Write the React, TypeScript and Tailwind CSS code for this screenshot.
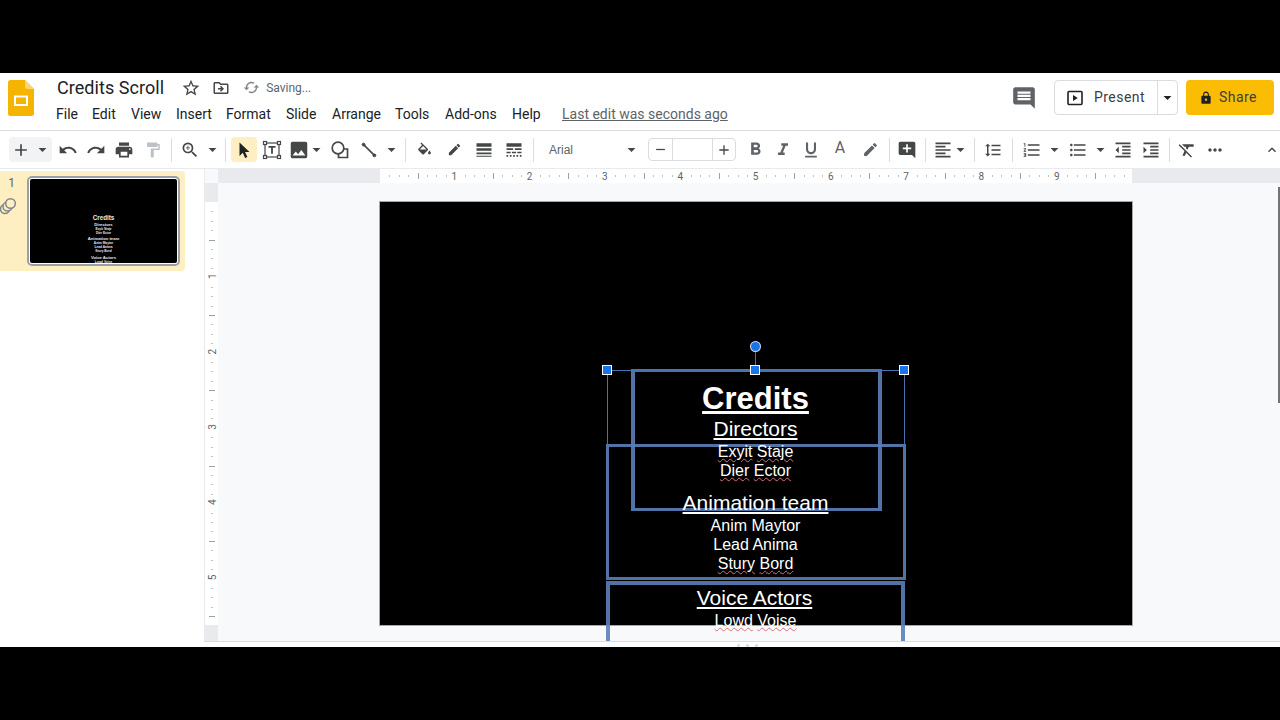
import type { ReactNode } from "react";
import {
  MdAdd,
  MdAddComment,
  MdArrowDropDown,
  MdCached,
  MdComment,
  MdEdit,
  MdExpandLess,
  MdFormatAlignLeft,
  MdFormatBold,
  MdFormatClear,
  MdFormatIndentDecrease,
  MdFormatIndentIncrease,
  MdFormatItalic,
  MdFormatLineSpacing,
  MdFormatListBulleted,
  MdFormatListNumbered,
  MdFormatPaint,
  MdFormatUnderlined,
  MdImage,
  MdLineStyle,
  MdLineWeight,
  MdLock,
  MdMoreHoriz,
  MdOutlineDriveFileMove,
  MdPrint,
  MdRedo,
  MdRemove,
  MdStarBorder,
  MdUndo,
  MdZoomIn,
} from "react-icons/md";

const PX_PER_INCH = 75.3;

const Slot = ({ className, children }: { className: string; children?: ReactNode }) => (
  <div className={`flex h-full shrink-0 items-center justify-center ${className}`}>{children}</div>
);

const Sep = ({ className }: { className: string }) => (
  <div className={`flex h-full shrink-0 items-center justify-center ${className}`}>
    <div className="h-[24px] w-px bg-[#dadce0]" />
  </div>
);

const Drop = () => <MdArrowDropDown size={19} className="shrink-0" />;

const SlidesLogo = () => (
  <svg width="26" height="36" viewBox="0 0 26 36" className="shrink-0">
    <path d="M2.500 0H17l9 9v24.500a2.500 2.500 0 0 1-2.500 2.500h-21A2.500 2.500 0 0 1 0 33.500v-31A2.500 2.500 0 0 1 2.500 0z" fill="#f4b400" />
    <path d="M17 0l9 9h-6.500A2.500 2.500 0 0 1 17 6.500z" fill="#f9d76a" />
    <path d="M6 15.500h14v10.500H6z" fill="#fff" />
    <path d="M8 17.500h10v6.500H8z" fill="#f4b400" />
  </svg>
);

const CursorIcon = () => (
  <svg width="20" height="20" viewBox="0 0 20 20">
    <path d="M5.500 2.500v13.500l3.300-3.200 2.300 5.200 2.300-1-2.300-5.100h4.400z" fill="#202124" />
  </svg>
);

const TextBoxIcon = () => (
  <svg width="20" height="20" viewBox="0 0 20 20" fill="none" stroke="#444746">
    <rect x="3" y="3" width="14" height="14" strokeWidth="1.200" />
    <rect x="1.500" y="1.500" width="3" height="3" fill="#fff" strokeWidth="1.200" />
    <rect x="15.500" y="1.500" width="3" height="3" fill="#fff" strokeWidth="1.200" />
    <rect x="1.500" y="15.500" width="3" height="3" fill="#fff" strokeWidth="1.200" />
    <rect x="15.500" y="15.500" width="3" height="3" fill="#fff" strokeWidth="1.200" />
    <path d="M6.500 6.800h7M10 6.800v7" strokeWidth="1.800" />
  </svg>
);

const ShapeIcon = () => (
  <svg width="20" height="20" viewBox="0 0 20 20" fill="none" stroke="#444746" strokeWidth="1.700">
    <circle cx="8" cy="8" r="5.800" />
    <path d="M13.800 9H17.500V17.500H8.500V13.800" />
  </svg>
);

const LineIcon = () => (
  <svg width="20" height="20" viewBox="0 0 20 20" fill="#444746" stroke="#444746">
    <path d="M4 4l12 12" strokeWidth="1.800" />
    <circle cx="4" cy="4" r="1.600" />
    <circle cx="16" cy="16" r="1.600" />
  </svg>
);

const FillIcon = () => (
  <svg width="17" height="17" viewBox="0 0 24 20" fill="#444746">
    <path d="M16.560 8.940L7.620 0 6.210 1.410l2.380 2.380-5.150 5.150c-.59.59-.59 1.540 0 2.120l5.500 5.500c.29.29.68.44 1.060.44s.77-.15 1.060-.44l5.500-5.500c.59-.58.59-1.530 0-2.120zM5.210 10L10 5.210 14.790 10H5.210zM19 11.500s-2 2.170-2 3.500c0 1.100.9 2 2 2s2-.9 2-2c0-1.330-2-3.500-2-3.500z" />
  </svg>
);

const PresentIcon = () => (
  <svg width="16" height="16" viewBox="0 0 16 16" fill="none">
    <rect x="1" y="1.500" width="14" height="13" rx="1" stroke="#202124" strokeWidth="1.600" />
    <path d="M6 5v6l4.800-3z" fill="#202124" />
  </svg>
);

const AnimationIcon = () => (
  <svg width="18" height="18" viewBox="0 0 18 18" fill="#feefc3" stroke="#80868b" strokeWidth="1.500">
    <circle cx="6" cy="12" r="4.500" />
    <circle cx="8.500" cy="9.500" r="4.500" />
    <circle cx="11.500" cy="6.500" r="4.800" />
  </svg>
);

const HorizontalRuler = () => (
  <svg width="752" height="14" viewBox="0 0 752 14" className="shrink-0 bg-white">
    {Array.from({ length: 80 }, (_, i) => {
      const x = Math.round((i * PX_PER_INCH) / 8) + 0.5;
      if (i % 8 === 0) return null;
      const half = i % 4 === 0;
      return <line key={i} x1={x} x2={x} y1={half ? 4 : 6} y2={half ? 10 : 8} stroke={half ? "#9aa0a6" : "#bdc1c6"} />;
    })}
    {Array.from({ length: 9 }, (_, i) => (
      <text key={i} x={(i + 1) * PX_PER_INCH - 1} y="11" textAnchor="middle" fontSize="10" fill="#5f6368" fontFamily="Roboto, sans-serif">
        {i + 1}
      </text>
    ))}
  </svg>
);

const VerticalRuler = () => (
  <svg width="14" height="423" viewBox="0 0 14 423" className="shrink-0 bg-white">
    {Array.from({ length: 45 }, (_, i) => {
      const y = Math.round((i * PX_PER_INCH) / 8) + 0.5;
      if (i % 8 === 0) return null;
      const half = i % 4 === 0;
      return <line key={i} y1={y} y2={y} x1={half ? 4 : 6} x2={half ? 10 : 8} stroke={half ? "#9aa0a6" : "#bdc1c6"} />;
    })}
    {Array.from({ length: 5 }, (_, i) => (
      <text
        key={i}
        transform={`translate(10.500 ${(i + 1) * PX_PER_INCH - 1}) rotate(-90)`}
        textAnchor="middle"
        fontSize="10"
        fill="#5f6368"
        fontFamily="Roboto, sans-serif"
      >
        {i + 1}
      </text>
    ))}
  </svg>
);

const Sp = ({ children }: { children: ReactNode }) => (
  <span className="underline decoration-[#d9707a] decoration-wavy decoration-1 underline-offset-[1px]">{children}</span>
);

const Heading = ({ className = "", children }: { className?: string; children: ReactNode }) => (
  <div className={`h-[26px] text-[21px] leading-[26px] underline underline-offset-2 ${className}`}>{children}</div>
);

const Name = ({ children }: { children: ReactNode }) => <div className="h-[19px] text-[16px] leading-[19px]">{children}</div>;

const Handle = ({ className }: { className: string }) => (
  <div className={`absolute h-[10px] w-[10px] border border-white bg-[#1a73e8] ${className}`} />
);

const Header = () => (
  <header className="flex h-[58px] shrink-0 border-b border-[#dadce0] pl-[8px] pr-[6px] pt-[7px] text-[#202124]">
    <SlidesLogo />
    <div className="ml-[22px] flex min-w-0 flex-col">
      <div className="-mt-px flex h-[17px] items-center">
        <span className="ml-px text-[18px] leading-[17px] tracking-[0.05px]">Credits Scroll</span>
        <MdStarBorder size={20} className="ml-[17px] text-[#444746]" />
        <MdOutlineDriveFileMove size={18} className="ml-[11px] text-[#444746]" />
        <MdCached size={17} className="ml-[13px] text-[#80868b]" />
        <span className="ml-[6px] text-[12px] text-[#5f6368]">Saving...</span>
      </div>
      <nav className="mt-[9px] flex h-[18px] items-center text-[14px] leading-[18px]">
        <span className="w-[36px]">File</span>
        <span className="w-[39px]">Edit</span>
        <span className="w-[45px]">View</span>
        <span className="w-[50px]">Insert</span>
        <span className="w-[60px]">Format</span>
        <span className="w-[46px]">Slide</span>
        <span className="w-[63px]">Arrange</span>
        <span className="w-[50px]">Tools</span>
        <span className="w-[67px]">Add-ons</span>
        <span className="w-[50px]">Help</span>
        <span className="text-[#5f6368] underline">Last edit was seconds ago</span>
      </nav>
    </div>
    <div className="ml-auto flex h-[35px] items-center">
      <MdComment size={26} className="text-[#5f6368]" />
      <div className="ml-[17px] flex h-[35px] w-[124px] items-center rounded border border-[#dadce0] bg-white">
        <span className="ml-[12px] flex"><PresentIcon /></span>
        <span className="ml-[11px] w-[64px] text-[14px] tracking-[0.45px] text-[#3c4043]">Present</span>
        <div className="flex h-full flex-1 items-center justify-center border-l border-[#dadce0]">
          <Drop />
        </div>
      </div>
      <div className="ml-[8px] flex h-[35px] w-[88px] items-center rounded bg-[#fbbc04]">
        <MdLock size={14} className="ml-[13px]" />
        <span className="ml-[6px] text-[14px] tracking-[0.45px] text-[#3c4043]">Share</span>
      </div>
    </div>
  </header>
);

const Toolbar = () => (
  <div className="flex h-[38px] shrink-0 items-center border-b border-[#e8eaed] pl-[9px] text-[#444746]">
    <div className="flex h-[25px] w-[43px] shrink-0 items-center rounded-sm bg-[#f1f3f4]">
      <MdAdd size={20} className="ml-[2px]" />
      <span className="ml-[2px] flex"><Drop /></span>
    </div>
    <Slot className="ml-[2px] w-[28px]"><MdUndo size={20} /></Slot>
    <Slot className="w-[28px]"><MdRedo size={20} /></Slot>
    <Slot className="w-[28px]"><MdPrint size={20} /></Slot>
    <Slot className="w-[29px]"><MdFormatPaint size={18} className="text-[#bdc1c6]" /></Slot>
    <Sep className="w-[8px]" />
    <Slot className="w-[29px]"><MdZoomIn size={20} /></Slot>
    <Slot className="w-[16px]"><Drop /></Slot>
    <Sep className="w-[11px]" />
    <div className="flex h-[25px] w-[26px] shrink-0 items-center justify-center rounded-sm bg-[#feefc3]"><CursorIcon /></div>
    <Slot className="w-[29px]"><TextBoxIcon /></Slot>
    <Slot className="w-[26px]"><MdImage size={22} /></Slot>
    <Slot className="w-[8px]"><Drop /></Slot>
    <Slot className="w-[40px]"><ShapeIcon /></Slot>
    <Slot className="w-[18px]"><LineIcon /></Slot>
    <Slot className="w-[26px]"><Drop /></Slot>
    <Sep className="w-[2px]" />
    <Slot className="w-[36px]"><FillIcon /></Slot>
    <Slot className="w-[24px]"><MdEdit size={15} /></Slot>
    <Slot className="w-[36px]"><MdLineWeight size={20} /></Slot>
    <Slot className="w-[24px]"><MdLineStyle size={20} /></Slot>
    <Sep className="w-[14px]" />
    <div className="flex h-full w-[105px] shrink-0 items-center">
      <span className="ml-[9px] text-[12px] text-[#5f6368] font-['Liberation_Sans',sans-serif]">Arial</span>
      <span className="ml-[49px] flex"><Drop /></span>
    </div>
    <div className="ml-[3px] flex h-[23px] w-[88px] shrink-0 items-center rounded-sm border border-[#dadce0]">
      <Slot className="w-[24px] border-r border-[#dadce0]"><MdRemove size={15} /></Slot>
      <div className="h-full w-[39px] shrink-0" />
      <Slot className="flex-1 border-l border-[#dadce0]"><MdAdd size={16} /></Slot>
    </div>
    <Slot className="ml-[5px] w-[28px]"><MdFormatBold size={21} className="text-[#5f6368]" /></Slot>
    <Slot className="w-[28px]"><MdFormatItalic size={20} className="text-[#5f6368]" /></Slot>
    <Slot className="w-[28px]"><MdFormatUnderlined size={20} className="text-[#5f6368]" /></Slot>
    <Slot className="ml-px w-[28px]"><span className="-mt-[3px] text-[16px] leading-none text-[#5f6368]">A</span></Slot>
    <Slot className="ml-[2px] w-[28px]"><MdEdit size={17} className="text-[#5f6368]" /></Slot>
    <Sep className="w-[10px]" />
    <Slot className="w-[26px]"><MdAddComment size={20} /></Slot>
    <Sep className="w-[10px]" />
    <Slot className="w-[26px]"><MdFormatAlignLeft size={20} /></Slot>
    <Slot className="w-[8px]"><Drop /></Slot>
    <Sep className="w-[20px]" />
    <Slot className="w-[18px]"><MdFormatLineSpacing size={20} /></Slot>
    <Sep className="w-[20px]" />
    <Slot className="w-[20px]"><MdFormatListNumbered size={20} /></Slot>
    <Slot className="w-[24px]"><Drop /></Slot>
    <Slot className="w-[24px]"><MdFormatListBulleted size={20} /></Slot>
    <Slot className="w-[20px]"><Drop /></Slot>
    <Slot className="w-[26px]"><MdFormatIndentDecrease size={20} /></Slot>
    <Slot className="w-[30px]"><MdFormatIndentIncrease size={20} /></Slot>
    <Sep className="w-[6px]" />
    <Slot className="w-[30px]"><MdFormatClear size={20} /></Slot>
    <Slot className="w-[26px]"><MdMoreHoriz size={20} /></Slot>
    <Slot className="ml-auto w-[16px]"><MdExpandLess size={24} /></Slot>
  </div>
);

const Filmstrip = () => (
  <aside className="w-[204px] shrink-0 pt-[2px]">
    <div className="flex h-[100px] w-[185px] rounded-r-sm bg-[#feefc3]">
      <div className="flex w-[27px] shrink-0 flex-col items-center pt-[4px]">
        <span className="mr-[4px] text-[12px] leading-[16px] text-[#5f6368]">1</span>
        <span className="mr-[11px] mt-[6px] flex"><AnimationIcon /></span>
      </div>
      <div className="mt-[5px] h-[90px] w-[153px] rounded-[5px] border-2 border-[#9aa0a6] bg-white p-px">
        <div className="h-full overflow-hidden rounded-[2px] bg-black pt-[35px] text-center font-bold text-[#e8eaed] font-['Liberation_Sans',sans-serif]">
          <div className="h-[8px] text-[6.300px] leading-[8px]">Credits</div>
          <div className="h-[5px] text-[4.200px] leading-[5px]">Directors</div>
          <div className="h-[4px] text-[3.200px] leading-[4px]">Exyit Staje</div>
          <div className="h-[4px] text-[3.200px] leading-[4px]">Dier Ector</div>
          <div className="mt-px h-[5px] text-[4.200px] leading-[5px]">Animation team</div>
          <div className="h-[4px] text-[3.200px] leading-[4px]">Anim Maytor</div>
          <div className="h-[4px] text-[3.200px] leading-[4px]">Lead Anima</div>
          <div className="h-[4px] text-[3.200px] leading-[4px]">Stury Bord</div>
          <div className="mt-[2px] h-[5px] text-[4.200px] leading-[5px]">Voice Actors</div>
          <div className="h-[4px] text-[3.200px] leading-[4px]">Lowd Voise</div>
        </div>
      </div>
    </div>
  </aside>
);

const Slide = () => (
  <div className="relative h-[423px] w-[752px] bg-black ring-1 ring-[#a8a8a8]">
    <div className="absolute left-[251px] top-[167px] h-[142px] w-[251px] border-[3px] border-x-4 border-[#5a80b8]/90" />
    <div className="absolute left-[226px] top-[242px] h-[136px] w-[300px] border-[3px] border-[#5a80b8]/90" />
    <div className="absolute left-[226px] top-[379px] h-[100px] w-[299px] border-4 border-[#5a80b8]/90" />

    <div className="absolute left-[227px] top-[168px] h-[75px] w-[298px] border-x border-t border-[#4a72ad]" />
    <div className="absolute left-[375px] top-[149px] h-[20px] w-px bg-[#4a72ad]" />

    <div className="absolute left-[227px] top-[178px] w-[297px] text-center text-white font-['Liberation_Sans',sans-serif]">
      <div className="h-[36px] text-[31px] font-bold leading-[38px] underline underline-offset-2">Credits</div>
      <Heading>Directors</Heading>
      <Name><Sp>Exyit</Sp> <Sp>Staje</Sp></Name>
      <Name><Sp>Dier</Sp> <Sp>Ector</Sp></Name>
      <Heading className="mt-[10px]">Animation team</Heading>
      <Name>Anim Maytor</Name>
      <Name>Lead Anima</Name>
      <Name><Sp>Stury</Sp> <Sp>Bord</Sp></Name>
      <Heading className="mt-[12px] -ml-[2px]">Voice Actors</Heading>
      <Name><Sp>Lowd</Sp> <Sp>Voise</Sp></Name>
    </div>

    <Handle className="left-[222px] top-[163px]" />
    <Handle className="left-[370px] top-[163px]" />
    <Handle className="left-[519px] top-[163px]" />
    <div className="absolute left-[371px] top-[140px] h-[9px] w-[9px] rounded-full bg-[#1a73e8] ring-1 ring-[#cfe0f7]" />
  </div>
);

const Workspace = () => (
  <div className="flex min-w-0 flex-1 flex-col">
    <div className="flex h-[14px] shrink-0">
      <div className="h-full w-[14px] shrink-0 border-l border-[#e8eaed] bg-[#f8f9fa]" />
      <div className="h-full w-[162px] shrink-0 bg-[#e8eaed]" />
      <HorizontalRuler />
      <div className="h-full flex-1 bg-[#e8eaed]" />
    </div>
    <div className="flex min-h-0 flex-1 border-b border-[#dadce0]">
      <div className="flex w-[14px] shrink-0 flex-col border-l border-[#e8eaed]">
        <div className="h-[19px] shrink-0 bg-[#e8eaed]" />
        <VerticalRuler />
        <div className="flex-1 bg-[#e8eaed]" />
      </div>
      <div className="relative min-w-0 flex-1 overflow-hidden bg-[#f8f9fa] pl-[162px] pt-[19px]">
        <Slide />
        <div className="absolute right-0 top-[4px] h-[216px] w-[2px] bg-[#70757a]" />
      </div>
    </div>
    <div className="flex h-[5px] shrink-0 gap-[6px] pl-[533px] pt-[2px]">
      <div className="h-[3px] w-[3px] rounded-full bg-[#dadce0]" />
      <div className="h-[3px] w-[3px] rounded-full bg-[#dadce0]" />
      <div className="h-[3px] w-[3px] rounded-full bg-[#dadce0]" />
    </div>
  </div>
);

const App = () => (
  <div className="flex h-screen flex-col overflow-hidden bg-black font-['Roboto',sans-serif]">
    <div className="h-[73px] shrink-0" />
    <div className="flex h-[574px] shrink-0 flex-col bg-white">
      <Header />
      <Toolbar />
      <main className="flex min-h-0 flex-1">
        <Filmstrip />
        <Workspace />
      </main>
    </div>
  </div>
);

export default App;
